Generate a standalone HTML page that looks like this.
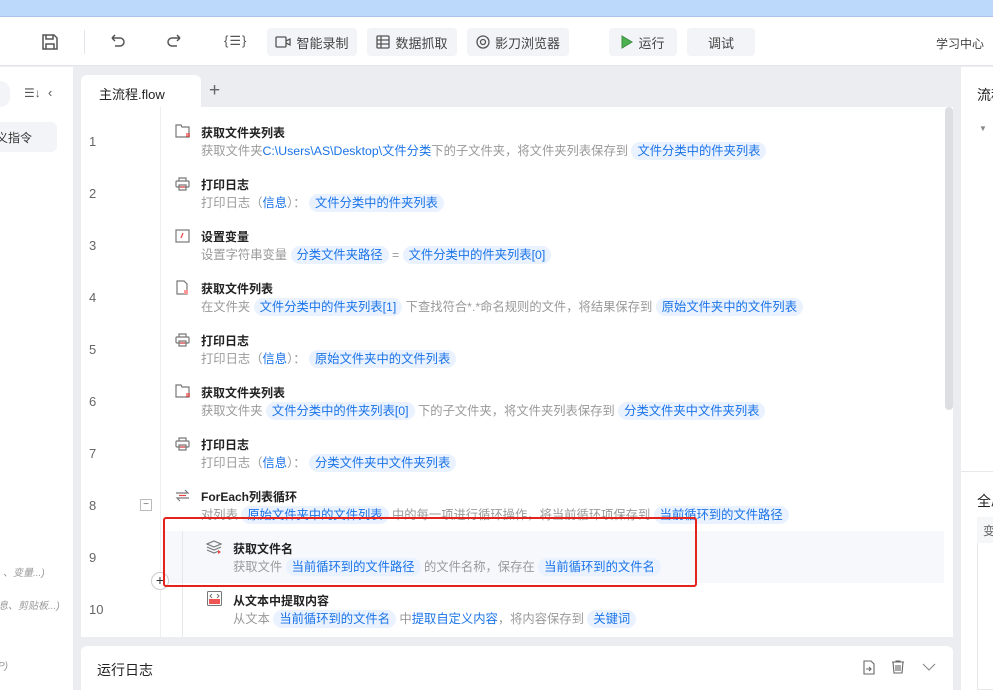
<!DOCTYPE html>
<html><head><meta charset="utf-8">
<style>
*{margin:0;padding:0;box-sizing:border-box}
body{width:993px;height:690px;overflow:hidden;background:#ebedf1;font-family:"Liberation Sans","Noto Sans CJK SC",sans-serif;position:relative;color:#333}
.a{position:absolute}
.top{left:0;top:0;width:993px;height:17px;background:#bcd8fb;border-bottom:1px solid #a9c4e8}
.tb{left:0;top:17px;width:993px;height:49px;background:#fff;border-bottom:1px solid #e3e5ea}
.btn{position:absolute;top:28px;height:28px;background:#f3f4f7;border-radius:4px;font-size:13px;color:#444;display:flex;align-items:center;justify-content:center;gap:5px}
.ic{position:absolute;top:32px;width:20px;height:20px}
.left{left:0;top:67px;width:73px;height:623px;background:#fff;overflow:hidden}
.right{left:961px;top:67px;width:32px;height:623px;background:#fff;overflow:hidden;white-space:nowrap}
.tab{left:81px;top:75px;width:120px;height:33px;background:#fff;border-radius:6px 6px 0 0;font-size:13px;color:#222;padding:9px 0 0 18px}
.main{left:81px;top:107px;width:872px;height:530px;background:#fff}
.num{position:absolute;left:89px;font-size:13px;color:#666}
.t{position:absolute;font-size:12px;font-weight:bold;color:#222;white-space:nowrap}
.d{position:absolute;font-size:12.3px;color:#999;white-space:nowrap;line-height:18px}
.c{background:#e9f2fe;color:#1a73e8;border-radius:9px;padding:1px 6px;display:inline-block;line-height:16px}
.bl{color:#1a73e8}
.log{left:81px;top:646px;width:872px;height:44px;background:#fff;border-radius:6px 6px 0 0;font-size:14px;color:#222;padding:14px 0 0 16px}
</style></head><body>
<div class="a top"></div>
<div class="a tb"></div>
<svg class="ic" style="left:40px" viewBox="0 0 20 20" fill="none" stroke="#555" stroke-width="1.5"><path d="M3 3h11l3 3v11H3z"/><path d="M6 3v4h7V3M6 17v-5h8v5"/></svg>
<div class="a" style="left:84px;top:30px;width:1px;height:24px;background:#e3e5ea"></div>
<svg class="ic" style="left:107px" viewBox="0 0 20 20" fill="none" stroke="#555" stroke-width="1.5"><path d="M5 6h8a4 4 0 010 8H8M5 6l3-3M5 6l3 3"/></svg>
<svg class="ic" style="left:165px" viewBox="0 0 20 20" fill="none" stroke="#555" stroke-width="1.5"><path d="M15 6H7a4 4 0 000 8h5M15 6l-3-3M15 6l-3 3"/></svg>
<div class="a" style="left:224px;top:33px;font-size:13px;color:#555;letter-spacing:1px">{☰}</div>
<div class="btn" style="left:267px;width:90px"><svg width="16" height="14" viewBox="0 0 16 14" fill="none" stroke="#555" stroke-width="1.3"><rect x="1" y="2" width="10" height="10" rx="1"/><path d="M11 6l4-2v6l-4-2"/></svg>智能录制</div>
<div class="btn" style="left:367px;width:90px"><svg width="14" height="14" viewBox="0 0 14 14" fill="none" stroke="#555" stroke-width="1.3"><rect x="1" y="1" width="12" height="12" rx="1"/><path d="M1 5h12M1 9h12M5 1v12"/></svg>数据抓取</div>
<div class="btn" style="left:467px;width:102px"><svg width="14" height="14" viewBox="0 0 14 14" fill="none" stroke="#555" stroke-width="1.3"><circle cx="7" cy="7" r="6"/><circle cx="7" cy="7" r="2.5"/></svg>影刀浏览器</div>
<div class="btn" style="left:609px;width:68px"><svg width="12" height="14" viewBox="0 0 12 14"><path d="M1 1l10 6-10 6z" fill="#4caf50" stroke="#3c8f40"/></svg>运行</div>
<div class="btn" style="left:687px;width:68px">调试</div>
<div class="a" style="left:936px;top:35px;font-size:12px;color:#444">学习中心</div>
<div class="a left">
  <div class="a" style="left:-10px;top:14px;width:20px;height:26px;background:#f3f4f7;border-radius:13px"></div>
  <div class="a" style="left:24px;top:19px;font-size:12px;color:#555">☰↓</div>
  <div class="a" style="left:48px;top:18px;font-size:13px;color:#555">‹</div>
  <div class="a" style="left:-4px;top:55px;width:61px;height:30px;background:#f3f4f7;border-radius:6px;font-size:12px;color:#333;padding:7px 0 0 0">义指令</div>
  <div class="a" style="left:3px;top:497px;font-size:10px;color:#999;font-style:italic;white-space:nowrap">、变量...)</div>
  <div class="a" style="left:-2px;top:530px;font-size:10px;color:#999;font-style:italic;white-space:nowrap">息、剪贴板...)</div>
  <div class="a" style="left:-2px;top:594px;font-size:10px;color:#999;font-style:italic">P)</div>
</div>
<div class="a right">
  <div class="a" style="left:16px;top:18px;font-size:14px;color:#222">流程</div>
  <div class="a" style="left:18px;top:57px;font-size:8px;color:#888">▼</div>
  <div class="a" style="left:0;top:404px;width:32px;height:1px;background:#e6e8ec"></div>
  <div class="a" style="left:16px;top:424px;font-size:14px;color:#222">全局</div>
  <div class="a" style="left:16px;top:450px;width:20px;height:173px;border:1px solid #e6e8ec;background:#fff"></div>
  <div class="a" style="left:16px;top:450px;width:20px;height:26px;background:#f5f6f8;font-size:12px;color:#666;padding:5px 0 0 6px">变</div>
</div>
<div class="a tab">主流程.flow</div>
<div class="a" style="left:209px;top:80px;font-size:19px;color:#666">+</div>
<div class="a main"></div>
<div class="a" style="left:160px;top:107px;width:1px;height:530px;background:#eceef2"></div>
<div class="a" style="left:945px;top:107px;width:8px;height:303px;background:#dcdee2;border-radius:4px"></div>
<div class="a" style="left:162px;top:531px;width:782px;height:52px;background:#f6f8fc"></div>
<div class="a" style="left:182px;top:531px;width:1px;height:106px;background:#e6e8ec"></div>

<div class="num" style="top:134px">1</div>
<div class="num" style="top:186px">2</div>
<div class="num" style="top:238px">3</div>
<div class="num" style="top:290px">4</div>
<div class="num" style="top:342px">5</div>
<div class="num" style="top:394px">6</div>
<div class="num" style="top:446px">7</div>
<div class="num" style="top:498px">8</div>
<div class="num" style="top:550px">9</div>
<div class="num" style="top:602px">10</div>
<div class="a" style="left:140px;top:499px;width:12px;height:12px;border:1px solid #bbb;font-size:10px;line-height:9px;text-align:center;color:#666">−</div>

<svg class="a" style="left:175px;top:124px" width="16" height="14" viewBox="0 0 16 14" fill="none" stroke="#777" stroke-width="1.2"><path d="M1 1h5l1 2h7v10H1z"/><path d="M11 10h4M11 12h4" stroke="#e44"/></svg>
<div class="t" style="left:201px;top:124px">获取文件夹列表</div>
<div class="d" style="left:201px;top:142px">获取文件夹<span class="bl">C:\Users\AS\Desktop\文件分类</span>下的子文件夹，将文件夹列表保存到 <span class="c">文件分类中的件夹列表</span></div>

<svg class="a" style="left:175px;top:177px" width="15" height="14" viewBox="0 0 15 14" fill="none" stroke="#777" stroke-width="1.2"><rect x="1" y="4" width="13" height="6" rx="1"/><path d="M4 4V1h7v3M4 8h7v5H4z"/><path d="M5 10h5" stroke="#e44"/></svg>
<div class="t" style="left:201px;top:176px">打印日志</div>
<div class="d" style="left:201px;top:194px">打印日志（<span class="bl">信息</span>）： <span class="c">文件分类中的件夹列表</span></div>

<svg class="a" style="left:175px;top:229px" width="15" height="14" viewBox="0 0 15 14" fill="none" stroke="#777" stroke-width="1.2"><rect x="1" y="1" width="13" height="12"/><path d="M6 9l2-5" stroke="#e44"/></svg>
<div class="t" style="left:201px;top:228px">设置变量</div>
<div class="d" style="left:201px;top:246px">设置字符串变量 <span class="c">分类文件夹路径</span> = <span class="c">文件分类中的件夹列表[0]</span></div>

<svg class="a" style="left:176px;top:280px" width="13" height="15" viewBox="0 0 13 15" fill="none" stroke="#777" stroke-width="1.2"><path d="M1 1h7l3 3v10H1z"/><rect x="8" y="10" width="4" height="4" fill="#f99" stroke="none"/></svg>
<div class="t" style="left:201px;top:280px">获取文件列表</div>
<div class="d" style="left:201px;top:298px">在文件夹 <span class="c">文件分类中的件夹列表[1]</span> 下查找符合*.*命名规则的文件，将结果保存到 <span class="c">原始文件夹中的文件列表</span></div>

<svg class="a" style="left:175px;top:333px" width="15" height="14" viewBox="0 0 15 14" fill="none" stroke="#777" stroke-width="1.2"><rect x="1" y="4" width="13" height="6" rx="1"/><path d="M4 4V1h7v3M4 8h7v5H4z"/><path d="M5 10h5" stroke="#e44"/></svg>
<div class="t" style="left:201px;top:332px">打印日志</div>
<div class="d" style="left:201px;top:350px">打印日志（<span class="bl">信息</span>）： <span class="c">原始文件夹中的文件列表</span></div>

<svg class="a" style="left:175px;top:384px" width="16" height="14" viewBox="0 0 16 14" fill="none" stroke="#777" stroke-width="1.2"><path d="M1 1h5l1 2h7v10H1z"/><path d="M11 10h4M11 12h4" stroke="#e44"/></svg>
<div class="t" style="left:201px;top:384px">获取文件夹列表</div>
<div class="d" style="left:201px;top:402px">获取文件夹 <span class="c">文件分类中的件夹列表[0]</span> 下的子文件夹，将文件夹列表保存到 <span class="c">分类文件夹中文件夹列表</span></div>

<svg class="a" style="left:175px;top:437px" width="15" height="14" viewBox="0 0 15 14" fill="none" stroke="#777" stroke-width="1.2"><rect x="1" y="4" width="13" height="6" rx="1"/><path d="M4 4V1h7v3M4 8h7v5H4z"/><path d="M5 10h5" stroke="#e44"/></svg>
<div class="t" style="left:201px;top:436px">打印日志</div>
<div class="d" style="left:201px;top:454px">打印日志（<span class="bl">信息</span>）： <span class="c">分类文件夹中文件夹列表</span></div>

<svg class="a" style="left:175px;top:489px" width="15" height="13" viewBox="0 0 15 13" fill="none" stroke="#777" stroke-width="1.2"><path d="M1 4h12l-3-3M14 9H2l3 3"/><path d="M4 6.5h7" stroke="#e44"/></svg>
<div class="t" style="left:201px;top:488px">ForEach列表循环</div>
<div class="d" style="left:201px;top:506px">对列表 <span class="c">原始文件夹中的文件列表</span> 中的每一项进行循环操作，将当前循环项保存到 <span class="c">当前循环到的文件路径</span></div>

<svg class="a" style="left:206px;top:540px" width="16" height="15" viewBox="0 0 16 15" fill="none" stroke="#777" stroke-width="1.2"><path d="M8 1l7 3-7 3-7-3z"/><path d="M1 7l7 3 7-3M1 10l7 3 5-2"/><path d="M12 10l3 2-3 2z" fill="#e44" stroke="none"/></svg>
<div class="t" style="left:233px;top:540px">获取文件名</div>
<div class="d" style="left:233px;top:558px">获取文件 <span class="c">当前循环到的文件路径</span> 的文件名称，保存在 <span class="c">当前循环到的文件名</span></div>

<svg class="a" style="left:207px;top:591px" width="15" height="15" viewBox="0 0 15 15"><rect x="0.5" y="0.5" width="14" height="14" rx="1" fill="#fff" stroke="#777"/><rect x="2" y="8" width="11" height="5" fill="#e55"/><path d="M5 3l-2 2 2 2M10 3l2 2-2 2" stroke="#777" fill="none"/></svg>
<div class="t" style="left:233px;top:592px">从文本中提取内容</div>
<div class="d" style="left:233px;top:610px">从文本 <span class="c">当前循环到的文件名</span> 中<span class="bl">提取自定义内容</span>，将内容保存到 <span class="c">关键词</span></div>

<div class="a" style="left:151px;top:572px;width:18px;height:18px;border:1px solid #ccc;border-radius:50%;background:#fff;font-size:14px;line-height:15px;text-align:center;color:#333">+</div>
<div class="a" style="left:163px;top:517px;width:534px;height:70px;border:2px solid #e4231c;border-radius:3px"></div>

<div class="a log">运行日志</div>
<svg class="a" style="left:863px;top:660px" width="12" height="15" viewBox="0 0 12 15" fill="none" stroke="#666" stroke-width="1.1"><path d="M1 1h7l3 3v10H1z"/><path d="M3 9h5M6 7l2 2-2 2"/></svg>
<svg class="a" style="left:891px;top:660px" width="14" height="14" viewBox="0 0 14 14" fill="none" stroke="#666" stroke-width="1.1"><path d="M1 2h12M5 2V1h4v1M2 2l1 11h8l1-11M5 5v6M7 5v6M9 5v6"/></svg>
<svg class="a" style="left:922px;top:663px" width="14" height="8" viewBox="0 0 14 8" fill="none" stroke="#888" stroke-width="1.1"><path d="M1 1l6 6 6-6"/></svg>
</body></html>
